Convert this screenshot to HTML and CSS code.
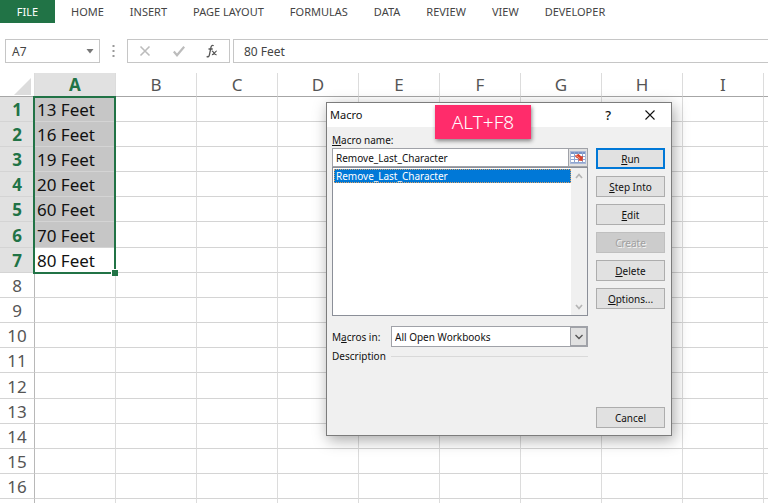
FILE: index.html
```html
<!DOCTYPE html>
<html lang="en">
<head>
  <meta charset="utf-8"/>
  <meta name="viewport" content="width=device-width, initial-scale=1">
  <title>Macro</title>
  <link rel="stylesheet" href="styles.css">
</head>
<body>
  <nav class="ribbon">
    <a class="file" href="#">FILE</a>
    <a href="#">HOME</a>
    <a href="#">INSERT</a>
    <a href="#">PAGE LAYOUT</a>
    <a href="#">FORMULAS</a>
    <a href="#">DATA</a>
    <a href="#">REVIEW</a>
    <a href="#">VIEW</a>
    <a href="#">DEVELOPER</a>
  </nav>

  <div class="formula-bar">
    <button class="name-box" aria-label="Name box">A7
      <svg width="8" height="5" viewBox="0 0 8 5"><path d="M0.5 0h7L4 4.5z" fill="#777"/></svg>
    </button>
    <svg class="dots" width="3" height="12" viewBox="0 0 3 12"><path d="M0.5 1h2M0.5 6h2M0.5 11h2" stroke="#999" stroke-width="2"/></svg>
    <div class="tools">
      <button aria-label="Cancel entry"><svg width="12" height="12" viewBox="0 0 12 12"><path d="M1.5 1.5l9 9M10.5 1.5l-9 9" stroke="#bcbcbc" stroke-width="1.6"/></svg></button>
      <button aria-label="Enter"><svg width="12" height="12" viewBox="0 0 12 12"><path d="M0.8 6.5l3.2 3.7L11.2 1.8" fill="none" stroke="#bcbcbc" stroke-width="2.2"/></svg></button>
      <button aria-label="Insert function"><svg width="12" height="14" viewBox="0 0 12 14"><path d="M7.6 1.9C6.6 0.8 5.4 1.4 5 3.2L3.4 10.8C3 12.7 2 13.3 0.7 12.4M2.5 5h4.2" fill="none" stroke="#555" stroke-width="1.3"/><path d="M5.8 7.2c2-.8 2 4.3 4.8 3.5M10.9 7c-1.8-.2-2.6 4.2-5 3.6" fill="none" stroke="#555" stroke-width="1.2"/></svg></button>
    </div>
    <input class="formula" type="text" aria-label="Formula" value="80 Feet">
  </div>

  <main class="sheet">
    <table class="grid">
      <colgroup>
        <col class="col-num">
        <col class="col"><col class="col"><col class="col"><col class="col"><col class="col">
        <col class="col"><col class="col"><col class="col"><col class="col"><col class="col">
      </colgroup>
      <thead>
        <tr><th class="corner"><svg width="17" height="17" viewBox="0 0 17 17"><path d="M17 0v17H0z" fill="#dcdcdc"/></svg></th><th class="active">A</th><th>B</th><th>C</th><th>D</th><th>E</th><th>F</th><th>G</th><th>H</th><th>I</th><th></th></tr>
      </thead>
      <tbody>
        <tr class="selected"><th>1</th><td>13 Feet</td><td></td><td></td><td></td><td></td><td></td><td></td><td></td><td></td><td></td></tr>
        <tr class="selected"><th>2</th><td>16 Feet</td><td></td><td></td><td></td><td></td><td></td><td></td><td></td><td></td><td></td></tr>
        <tr class="selected"><th>3</th><td>19 Feet</td><td></td><td></td><td></td><td></td><td></td><td></td><td></td><td></td><td></td></tr>
        <tr class="selected"><th>4</th><td>20 Feet</td><td></td><td></td><td></td><td></td><td></td><td></td><td></td><td></td><td></td></tr>
        <tr class="selected"><th>5</th><td>60 Feet</td><td></td><td></td><td></td><td></td><td></td><td></td><td></td><td></td><td></td></tr>
        <tr class="selected"><th>6</th><td>70 Feet</td><td></td><td></td><td></td><td></td><td></td><td></td><td></td><td></td><td></td></tr>
        <tr class="selected current"><th>7</th><td>80 Feet</td><td></td><td></td><td></td><td></td><td></td><td></td><td></td><td></td><td></td></tr>
        <tr><th>8</th><td></td><td></td><td></td><td></td><td></td><td></td><td></td><td></td><td></td><td></td></tr>
        <tr><th>9</th><td></td><td></td><td></td><td></td><td></td><td></td><td></td><td></td><td></td><td></td></tr>
        <tr><th>10</th><td></td><td></td><td></td><td></td><td></td><td></td><td></td><td></td><td></td><td></td></tr>
        <tr><th>11</th><td></td><td></td><td></td><td></td><td></td><td></td><td></td><td></td><td></td><td></td></tr>
        <tr><th>12</th><td></td><td></td><td></td><td></td><td></td><td></td><td></td><td></td><td></td><td></td></tr>
        <tr><th>13</th><td></td><td></td><td></td><td></td><td></td><td></td><td></td><td></td><td></td><td></td></tr>
        <tr><th>14</th><td></td><td></td><td></td><td></td><td></td><td></td><td></td><td></td><td></td><td></td></tr>
        <tr><th>15</th><td></td><td></td><td></td><td></td><td></td><td></td><td></td><td></td><td></td><td></td></tr>
        <tr><th>16</th><td></td><td></td><td></td><td></td><td></td><td></td><td></td><td></td><td></td><td></td></tr>
        <tr><th></th><td></td><td></td><td></td><td></td><td></td><td></td><td></td><td></td><td></td><td></td></tr>
      </tbody>
    </table>
    <div class="selection"></div>
  </main>

  <section class="dialog" role="dialog" aria-labelledby="dialog-title">
    <header class="title-bar">
      <span id="dialog-title">Macro</span>
      <button class="help" aria-label="Help">?</button>
      <button class="close" aria-label="Close"><svg width="10" height="10" viewBox="0 0 10 10"><path d="M0.5 0.5l9 9M9.5 0.5l-9 9" stroke="#111" stroke-width="1.1"/></svg></button>
    </header>
    <div class="dialog-body">
      <div class="fields">
        <label class="name-label" for="macro-name"><u>M</u>acro name:</label>
        <div class="name-row">
          <input id="macro-name" type="text" value="Remove_Last_Character">
          <button class="picker" aria-label="Select range">
            <svg width="16" height="13" viewBox="0 0 16 13"><rect x="0.5" y="0.5" width="15" height="12" fill="#fff" stroke="#a9b8d8"/><path d="M1 2h14" stroke="#5577b8" stroke-width="1.6"/><path d="M1 5.5h14M1 8.5h14M1 11.5h14M4.5 1v11M8.5 1v11M12.5 1v11" stroke="#8fa5d0"/><path d="M5 4.5l3.5-1.5 3 2.5 1.5-.5-.5 5-4.5-.5 1-1.5-3-1.5z" fill="#d9412b"/><path d="M6 4.5l4 3" stroke="#f39b80"/></svg>
          </button>
        </div>
        <div class="list-row">
          <select class="macro-list" size="6" aria-label="Macros">
            <option selected>Remove_Last_Character</option>
          </select>
          <div class="scroll">
            <svg width="8" height="6" viewBox="0 0 8 6"><path d="M1 5l3-3.5L7 5" fill="none" stroke="#b5b5b5" stroke-width="1.7"/></svg>
            <svg width="8" height="6" viewBox="0 0 8 6"><path d="M1 1l3 3.5L7 1" fill="none" stroke="#b5b5b5" stroke-width="1.7"/></svg>
          </div>
        </div>
        <div class="macros-in">
          <label for="macros-in">M<u>a</u>cros in:</label>
          <div class="combo">
            <select id="macros-in"><option>All Open Workbooks</option></select>
            <span class="arrow"><svg width="8" height="6" viewBox="0 0 8 6"><path d="M0.5 1L4 4.5 7.5 1" fill="none" stroke="#555" stroke-width="1.4"/></svg></span>
          </div>
        </div>
        <div class="description">Description</div>
      </div>
      <div class="actions">
        <button class="default"><u>R</u>un</button>
        <button><u>S</u>tep Into</button>
        <button><u>E</u>dit</button>
        <button disabled>Create</button>
        <button><u>D</u>elete</button>
        <button><u>O</u>ptions...</button>
        <button class="cancel">Cancel</button>
      </div>
    </div>
    <div class="shortcut">ALT+F8</div>
  </section>
</body>
</html>
```
FILE: styles.css
```css
* {
  box-sizing: border-box;
}
body {
  margin: 0;
  height: 100vh;
  overflow: hidden;
  display: flex;
  flex-direction: column;
  position: relative;
  background: #fff;
  color: #444;
  font-family: "Noto Sans", sans-serif;
}
button, input, select {
  font: inherit;
  color: inherit;
  margin: 0;
  padding: 0;
  border: none;
  border-radius: 0;
  outline: none;
}

/* ribbon */
.ribbon {
  display: flex;
  gap: 26px;
  height: 23px;
  font-size: 11px;
  line-height: 23px;
}
.ribbon a {
  color: #444;
  text-decoration: none;
  white-space: nowrap;
}
.ribbon .file {
  width: 55px;
  margin-right: -10px;
  background: #217346;
  color: #fff;
  text-align: center;
}

/* formula bar */
.formula-bar {
  display: flex;
  align-items: center;
  height: 24px;
  margin: 16px 0 10px 5px;
  font-size: 12px;
}
.name-box {
  display: flex;
  align-items: center;
  justify-content: space-between;
  width: 95px;
  height: 24px;
  padding: 0 5px 0 6px;
  border: 1px solid #c6c6c6;
  background: #fff;
}
.dots {
  margin: 0 12px;
}
.tools {
  display: flex;
  align-items: center;
  justify-content: space-between;
  width: 103px;
  height: 24px;
  padding: 0 11px;
  border: 1px solid #c6c6c6;
}
.tools button {
  display: flex;
  background: none;
}
.formula {
  flex: 1;
  min-width: 0;
  height: 24px;
  margin-left: 3px;
  padding-left: 10px;
  border: 1px solid #c6c6c6;
  border-right: none;
}

/* sheet */
.sheet {
  flex: 1;
  position: relative;
  overflow: hidden;
}
.grid {
  table-layout: fixed;
  width: 845px;
  border-collapse: separate;
  border-spacing: 0;
  font-size: 17px;
  line-height: 22px;
}
.col-num {
  width: 35px;
}
.col {
  width: 81px;
}
.grid th, .grid td {
  height: 25px;
  padding: 2px 0 0;
  border-right: 1px solid #dcdcdc;
  border-bottom: 1px solid #d4d4d4;
}
.grid tbody tr:nth-child(6n) > * {
  height: 26px;
}
.grid th {
  font-weight: normal;
  text-align: center;
  color: #555;
}
.grid thead th {
  height: 24px;
  padding: 0;
  line-height: 23px;
  border-bottom-color: #a6a6a6;
}
.grid tbody th {
  border-right-color: #b8b8b8;
}
.grid td {
  padding-left: 2px;
  color: #111;
}
.grid thead .corner {
  padding: 3px 3px 0 0;
  line-height: 0;
  text-align: right;
}
.grid thead .active,
.grid .selected th {
  background: #e1e1e1;
  color: #217346;
  font-weight: bold;
}
.grid .selected td:nth-child(2) {
  background: #c6c6c6;
}
.grid .current td:nth-child(2) {
  background: #fff;
}
.selection {
  position: absolute;
  top: 23px;
  left: 33px;
  width: 83px;
  height: 178px;
  border: 2px solid #217346;
}
.selection::after {
  content: "";
  position: absolute;
  right: -4px;
  bottom: -4px;
  width: 6px;
  height: 6px;
  background: #217346;
  border: 1px solid #fff;
  border-width: 1px 0 0 1px;
}

/* macro window */
.dialog {
  position: absolute;
  top: 102px;
  left: 326px;
  width: 346px;
  border: 1px solid #7c7c7c;
  background: #f0f0f0;
  box-shadow: 2px 4px 14px rgba(0, 0, 0, 0.35);
  color: #111;
  font-size: 10px;
  line-height: 14px;
}
.title-bar {
  display: flex;
  align-items: center;
  height: 24px;
  padding: 0 16px 0 3px;
  background: #fff;
  font-size: 11px;
}
.title-bar button {
  display: flex;
  background: none;
}
.help {
  margin-left: auto;
  font-size: 13px;
  font-weight: 500;
}
.close {
  margin-left: 34px;
}
.dialog-body {
  display: flex;
  gap: 8px;
  padding: 6px 6px 7px 5px;
}
.fields {
  flex: 1;
  min-width: 0;
}
.name-label {
  display: block;
  height: 15px;
}
.name-row {
  display: flex;
  height: 19px;
  border: 1px solid #a0a2a8;
  background: #fff;
}
.name-row input {
  flex: 1;
  min-width: 0;
  padding-left: 3px;
}
.picker {
  display: flex;
  align-items: center;
  justify-content: center;
  width: 19px;
  border-left: 1px solid #a0a2a8;
  background: #e1e1e1;
}
.list-row {
  display: flex;
  height: 149px;
  border: 1px solid #8b8f98;
  background: #fff;
}
.macro-list {
  flex: 1;
  min-width: 0;
  height: 147px;
  padding: 1px 0 1px 1px;
  overflow: hidden;
  background: #fff;
}
.macro-list option {
  min-height: 12px;
  padding: 0 2px;
  line-height: 12px;
}
.macro-list option:checked {
  background: linear-gradient(#0078d7, #0078d7);
  outline: 1px dotted #d9a066;
  outline-offset: -1px;
  -webkit-text-fill-color: #fff;
}
.scroll {
  display: flex;
  flex-direction: column;
  justify-content: space-between;
  align-items: center;
  width: 16px;
  padding: 5px 0;
  background: #f0f0f0;
}
.macros-in {
  display: flex;
  align-items: center;
  justify-content: space-between;
  margin-top: 10px;
}
.combo {
  display: flex;
  width: 197px;
  height: 21px;
  border: 1px solid #a0a2a8;
  background: #fff;
}
.combo select {
  flex: 1;
  padding-left: 3px;
  appearance: none;
  background: none;
}
.arrow {
  display: flex;
  align-items: center;
  justify-content: center;
  width: 17px;
  border: 1px solid #a0a2a8;
  background: #e1e1e1;
}
.description {
  display: flex;
  align-items: center;
  gap: 5px;
  margin-top: 2px;
}
.description::after {
  content: "";
  flex: 1;
  border-top: 1px solid #d9d9d9;
}
.actions {
  display: flex;
  flex-direction: column;
  gap: 7px;
  width: 69px;
  padding-top: 15px;
}
.actions button {
  height: 21px;
  border: 1px solid #adadad;
  background: #e1e1e1;
}
.actions .default {
  border: 2px solid #0078d7;
}
.actions button:disabled {
  border-color: #bfbfbf;
  background: #ccc;
  color: #a0a0a0;
  text-shadow: 1px 1px #f4f4f4;
}
.actions .cancel {
  margin-top: 91px;
}

/* shortcut hint */
.shortcut {
  position: absolute;
  top: 2px;
  left: 108px;
  width: 96px;
  background: #ff2c6b;
  box-shadow: 1px 2px 4px rgba(0, 0, 0, 0.45);
  color: #fff;
  font-size: 19px;
  font-weight: 300;
  line-height: 34px;
  text-align: center;
}
```
